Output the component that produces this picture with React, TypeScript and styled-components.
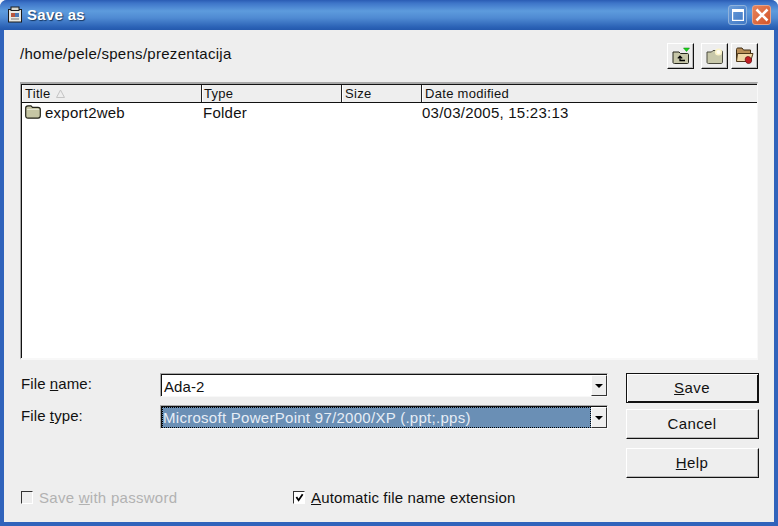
import React from "react";
import styled, { createGlobalStyle } from "styled-components";

const Global = createGlobalStyle`
  html, body { margin: 0; padding: 0; background: #f4f6fa; }
  * { box-sizing: border-box; }
`;

const Win = styled.div`
  width: 778px;
  height: 526px;
  display: flex;
  flex-direction: column;
  border-radius: 7px 7px 0 0;
  overflow: hidden;
  font-family: "Liberation Sans", Arial, sans-serif;
  font-size: 15px;
  color: #111;
  background: #3063bb;
`;

const TitleBar = styled.div`
  height: 30px;
  flex: none;
  display: flex;
  align-items: center;
  padding: 0 7px 1px 7px;
  background: linear-gradient(180deg, #2a5cb4 0, #3d74c8 3px, #5d9bdd 11px, #4f8ad2 18px, #2b62b6 27px, #2459ad 30px);
  color: #fff;
  font-weight: bold;
  font-size: 15px;
`;

const TitleText = styled.span`
  margin-left: 4px;
  text-shadow: 1px 1px 1px #16365f;
  letter-spacing: 0.3px;
`;

const Spacer = styled.div`
  flex: 1;
`;

const WinBtn = styled.div<{ $close?: boolean }>`
  width: 19px;
  height: 20px;
  border-radius: 3px;
  margin-left: 5px;
  display: flex;
  align-items: center;
  justify-content: center;
  border: 1px solid ${(p) => (p.$close ? "#e6a288" : "#8fb2dc")};
  background: ${(p) =>
    p.$close
      ? "linear-gradient(135deg, #e6845c, #d4552a)"
      : "linear-gradient(135deg, #6a9cd8, #3f78c6)"};
`;

const Body = styled.div`
  flex: 1;
  margin: 0 4px 4px;
  background: #eeeeee;
  padding: 13px 15px 0 17px;
  display: flex;
  flex-direction: column;
`;

const PathRow = styled.div`
  height: 26px;
  padding-right: 1px;
  display: flex;
  align-items: center;
`;

const PathText = styled.span`
  margin-left: -1px;
  padding-bottom: 5px;
  letter-spacing: 0.28px;
`;

const ToolBtn = styled.div<{ $gap: number }>`
  width: 27px;
  height: 26px;
  margin-left: ${(p) => p.$gap}px;
  display: flex;
  align-items: center;
  justify-content: center;
  background: #eeeeee;
  border-top: 1px solid #fff;
  border-left: 1px solid #fff;
  border-right: 1px solid #111;
  border-bottom: 1px solid #111;
  box-shadow: inset -1px -1px 0 #b8b8b8;
`;

const ListBox = styled.div`
  margin-top: 13px;
  margin-left: -1px;
  height: 278px;
  margin-right: 1px;
  display: flex;
  flex-direction: column;
  background: #fff;
  border-top: 2px solid #a8a8a8;
  border-left: 1px solid #a8a8a8;
  border-right: 1px solid #f8f8f8;
  border-bottom: 2px solid #f8f8f8;
  box-shadow: inset 1px 0 0 #111;
`;

const HeaderRow = styled.div`
  height: 19px;
  flex: none;
  display: flex;
  background: #eeeeee;
  margin-left: 1px;
  border-bottom: 1px solid #111;
  border-top: 1px solid #111;
`;

const HeaderCell = styled.div<{ $w: number; $pad?: number }>`
  width: ${(p) => p.$w}px;
  flex: ${(p) => (p.$w ? "none" : "1")};
  padding-left: ${(p) => p.$pad ?? 1}px;
  font-size: 13px;
  line-height: 17px;
  letter-spacing: 0.3px;
  display: flex;
  align-items: center;
  gap: 5px;
  border-left: 1px solid #fff;
  border-right: 1px solid #222;
  &:last-child {
    border-right: none;
  }
`;

const FileRow = styled.div`
  height: 18px;
  display: flex;
  align-items: center;
  margin-left: 2px;
`;

const FileCell = styled.div<{ $w: number }>`
  width: ${(p) => p.$w}px;
  flex: none;
  padding-left: 2px;
  display: flex;
  align-items: center;
  gap: 4px;
  letter-spacing: 0.24px;
  white-space: nowrap;
`;

const Form = styled.div`
  margin-top: 13px;
  display: flex;
  gap: 18px;
`;

const Fields = styled.div`
  flex: 1;
  display: flex;
  flex-direction: column;
  gap: 8px;
`;

const FieldRow = styled.div`
  display: flex;
`;

const Label = styled.div`
  width: 139px;
  margin-top: 2px;
  font-size: 15px;
  line-height: 18px;
  letter-spacing: 0.1px;
`;

const Combo = styled.div`
  flex: 1;
  height: 24px;
  display: flex;
  background: #fff;
  border-top: 1px solid #a8a8a8;
  border-left: 1px solid #a8a8a8;
  border-right: 1px solid #f8f8f8;
  border-bottom: 1px solid #f8f8f8;
  box-shadow: inset 1px 1px 0 #111;
`;

const ComboText = styled.div`
  flex: 1;
  padding: 2px 0 0 3px;
  line-height: 21px;
  letter-spacing: 0.1px;
`;

const ComboSelected = styled.div`
  flex: 1;
  margin: 1px 0 0 1px;
  line-height: 20px;
  color: #e6edf5;
  background: #6a8fb5;
  border: 1px dotted #000;
  letter-spacing: 0.28px;
`;

const ComboArrow = styled.div`
  width: 16px;
  margin-top: 1px;
  flex: none;
  display: flex;
  align-items: center;
  justify-content: center;
  background: #eeeeee;
  border-top: 1px solid #fff;
  border-left: 1px solid #fff;
  border-right: 1px solid #333;
  border-bottom: 1px solid #333;
  &::after {
    content: "";
    border-left: 4px solid transparent;
    border-right: 4px solid transparent;
    border-top: 4px solid #000;
  }
`;

const Buttons = styled.div`
  width: 133px;
  flex: none;
  display: flex;
  flex-direction: column;
  align-items: stretch;
`;

const Btn = styled.div<{ $def?: boolean; $top: number }>`
  height: 30px;
  margin-top: ${(p) => p.$top}px;
  padding: 0 1px 2px 0;
  display: flex;
  align-items: center;
  justify-content: center;
  background: #eeeeee;
  font-size: 15px;
  letter-spacing: 0.4px;
  border-top: 1px solid ${(p) => (p.$def ? "#111" : "#fff")};
  border-left: 1px solid ${(p) => (p.$def ? "#111" : "#fff")};
  border-right: 1px solid #111;
  border-bottom: 1px solid #111;
  box-shadow: ${(p) =>
    p.$def
      ? "inset 1px 1px 0 #fff, inset -1px -1px 0 #111"
      : "inset -1px -1px 0 #b8b8b8"};
`;

const Options = styled.div`
  margin-top: 8px;
  display: flex;
  align-items: center;
  height: 22px;
`;

const CheckItem = styled.div<{ $w?: number; $off?: boolean }>`
  width: ${(p) => (p.$w ? `${p.$w}px` : "auto")};
  display: flex;
  align-items: center;
  gap: 6px;
  letter-spacing: ${(p) => (p.$off ? "0.27px" : "0.15px")};
  color: ${(p) => (p.$off ? "#b2b2b2" : "#111")};
`;

const Box = styled.div<{ $off?: boolean }>`
  width: 12px;
  height: 13px;
  flex: none;
  display: flex;
  align-items: center;
  justify-content: center;
  background: ${(p) => (p.$off ? "#eeeeee" : "#fff")};
  border-top: 1px solid #333;
  border-left: 1px solid #333;
  border-right: 1px solid #fff;
  border-bottom: 1px solid #fff;
`;

const FolderIcon = () => (
  <svg width="16" height="14" viewBox="0 0 16 14">
    <path
      d="M0.7 3 C0.7 1.6 1.6 0.8 3 0.8 H6 L7.5 2.4 H13 C14.5 2.4 15.3 3.2 15.3 4.5 V10.8 C15.3 12.4 14.4 13.2 13 13.2 H3 C1.6 13.2 0.7 12.4 0.7 10.8 Z"
      fill="#c6c6a4"
      stroke="#232318"
      strokeWidth="1.2"
    />
    <path d="M2 4.5 H14" stroke="#e6e6d4" />
  </svg>
);

const UpIcon = () => (
  <svg width="18" height="18" viewBox="0 0 18 18">
    <path d="M1 5 H7 L8.5 6.5 H15.5 C16.2 6.5 16.5 7 16.5 7.5 V15.5 C16.5 16.2 16 16.5 15.5 16.5 H2.5 C1.5 16.5 1 16 1 15.5 Z" fill="#c6c6a8" stroke="#26261c" />
    <path d="M8 9.5 V13.5 H13 M5.8 11.4 L8 9.2 L10.2 11.4" fill="none" stroke="#000" strokeWidth="1.3" />
    <path d="M11.5 1 H17.5 L14.5 4.6 Z" fill="#18d818" stroke="#0a7a0a" strokeWidth="0.5" />
  </svg>
);

const NewIcon = () => (
  <svg width="18" height="18" viewBox="0 0 18 18">
    <path d="M1 5 H5.5 L7 3.5 H15 C16 3.5 16.5 4 16.5 5 V15 C16.5 16 16 16.5 15 16.5 H2.5 C1.5 16.5 1 16 1 15 Z" fill="#c8c8aa" stroke="#4a4a3e" />
    <circle cx="12.5" cy="5" r="3.6" fill="#fbf3c8" />
    <circle cx="12.5" cy="5" r="2" fill="#fffef2" />
  </svg>
);

const DeleteIcon = () => (
  <svg width="19" height="18" viewBox="0 0 19 18">
    <path d="M1.5 2.5 C1.5 1.5 2 1 3 1 H7 L8.5 3 H15.5 V14.5 H3 C2 14.5 1.5 14 1.5 13 Z" fill="#b88e58" stroke="#3c2a12" />
    <path d="M2.5 6.5 H18 L15.5 14.5 H1.5 Z" fill="#f0d8a8" stroke="#4e3818" />
    <path d="M10.5 11 C11 9.5 13.5 9 15 10.2 C16.8 11.6 17.2 14.2 15.8 15.7 C14.4 17 12 16.6 11 15.2 C10.2 13.9 10 12.3 10.5 11 Z" fill="#c01c22" stroke="#5e0c10" strokeWidth="0.7" />
  </svg>
);

const SortArrow = () => (
  <svg width="9" height="9" viewBox="0 0 9 9">
    <path d="M4.5 1 L8.5 8.5 H0.5 Z" fill="none" stroke="#c4c4c4" />
  </svg>
);

const AppIcon = () => (
  <svg width="16" height="17" viewBox="0 0 16 17">
    <rect x="1.5" y="3.5" width="13" height="12.5" fill="#e8e8e2" stroke="#1b1b1b" />
    <rect x="4" y="1" width="8" height="3.5" fill="#d8d8d0" stroke="#1b1b1b" />
    <rect x="4" y="7" width="4" height="4" fill="#b8553c" />
    <rect x="8" y="7" width="4" height="4" fill="#4a78b4" />
    <path d="M4 13 H12" stroke="#777" />
  </svg>
);

export default function App() {
  return (
    <Win>
      <Global />
      <TitleBar>
        <AppIcon />
        <TitleText>Save as</TitleText>
        <Spacer />
        <WinBtn>
          <svg width="12" height="12" viewBox="0 0 12 12">
            <rect x="0.6" y="0.6" width="10.8" height="10.8" fill="none" stroke="#fff" strokeWidth="1.2" />
            <path d="M1 2 H11" stroke="#fff" strokeWidth="2" />
          </svg>
        </WinBtn>
        <WinBtn $close>
          <svg width="14" height="14" viewBox="0 0 14 14">
            <path d="M1.5 1.5 L12.5 12.5 M12.5 1.5 L1.5 12.5" stroke="#fff" strokeWidth="2.6" />
          </svg>
        </WinBtn>
      </TitleBar>
      <Body>
        <PathRow>
          <PathText>/home/pele/spens/prezentacija</PathText>
          <Spacer />
          <ToolBtn $gap={0}><UpIcon /></ToolBtn>
          <ToolBtn $gap={7}><NewIcon /></ToolBtn>
          <ToolBtn $gap={3}><DeleteIcon /></ToolBtn>
        </PathRow>
        <ListBox>
          <HeaderRow>
            <HeaderCell $w={180} $pad={2}>Title <SortArrow /></HeaderCell>
            <HeaderCell $w={140}>Type</HeaderCell>
            <HeaderCell $w={80} $pad={2}>Size</HeaderCell>
            <HeaderCell $w={0} $pad={2}>Date modified</HeaderCell>
          </HeaderRow>
          <FileRow>
            <FileCell $w={178}><FolderIcon />export2web</FileCell>
            <FileCell $w={140}>Folder</FileCell>
            <FileCell $w={79} />
            <FileCell $w={300}>03/03/2005, 15:23:13</FileCell>
          </FileRow>
        </ListBox>
        <Form>
          <Fields>
            <FieldRow>
              <Label>File <u>n</u>ame:</Label>
              <Combo>
                <ComboText>Ada-2</ComboText>
                <ComboArrow />
              </Combo>
            </FieldRow>
            <FieldRow>
              <Label>File <u>t</u>ype:</Label>
              <Combo>
                <ComboSelected>Microsoft PowerPoint 97/2000/XP (.ppt;.pps)</ComboSelected>
                <ComboArrow />
              </Combo>
            </FieldRow>
          </Fields>
          <Buttons>
            <Btn $def $top={0}><span><u>S</u>ave</span></Btn>
            <Btn $top={6}>Cancel</Btn>
            <Btn $top={9}><span><u>H</u>elp</span></Btn>
          </Buttons>
        </Form>
        <Options>
          <CheckItem $w={272} $off>
            <Box $off />
            <span>Save <u>w</u>ith password</span>
          </CheckItem>
          <CheckItem>
            <Box>
              <svg width="9" height="9" viewBox="0 0 10 10">
                <path d="M1.5 4.5 L4 8 L8.5 1.5" fill="none" stroke="#000" strokeWidth="2" />
              </svg>
            </Box>
            <span><u>A</u>utomatic file name extension</span>
          </CheckItem>
        </Options>
      </Body>
    </Win>
  );
}
